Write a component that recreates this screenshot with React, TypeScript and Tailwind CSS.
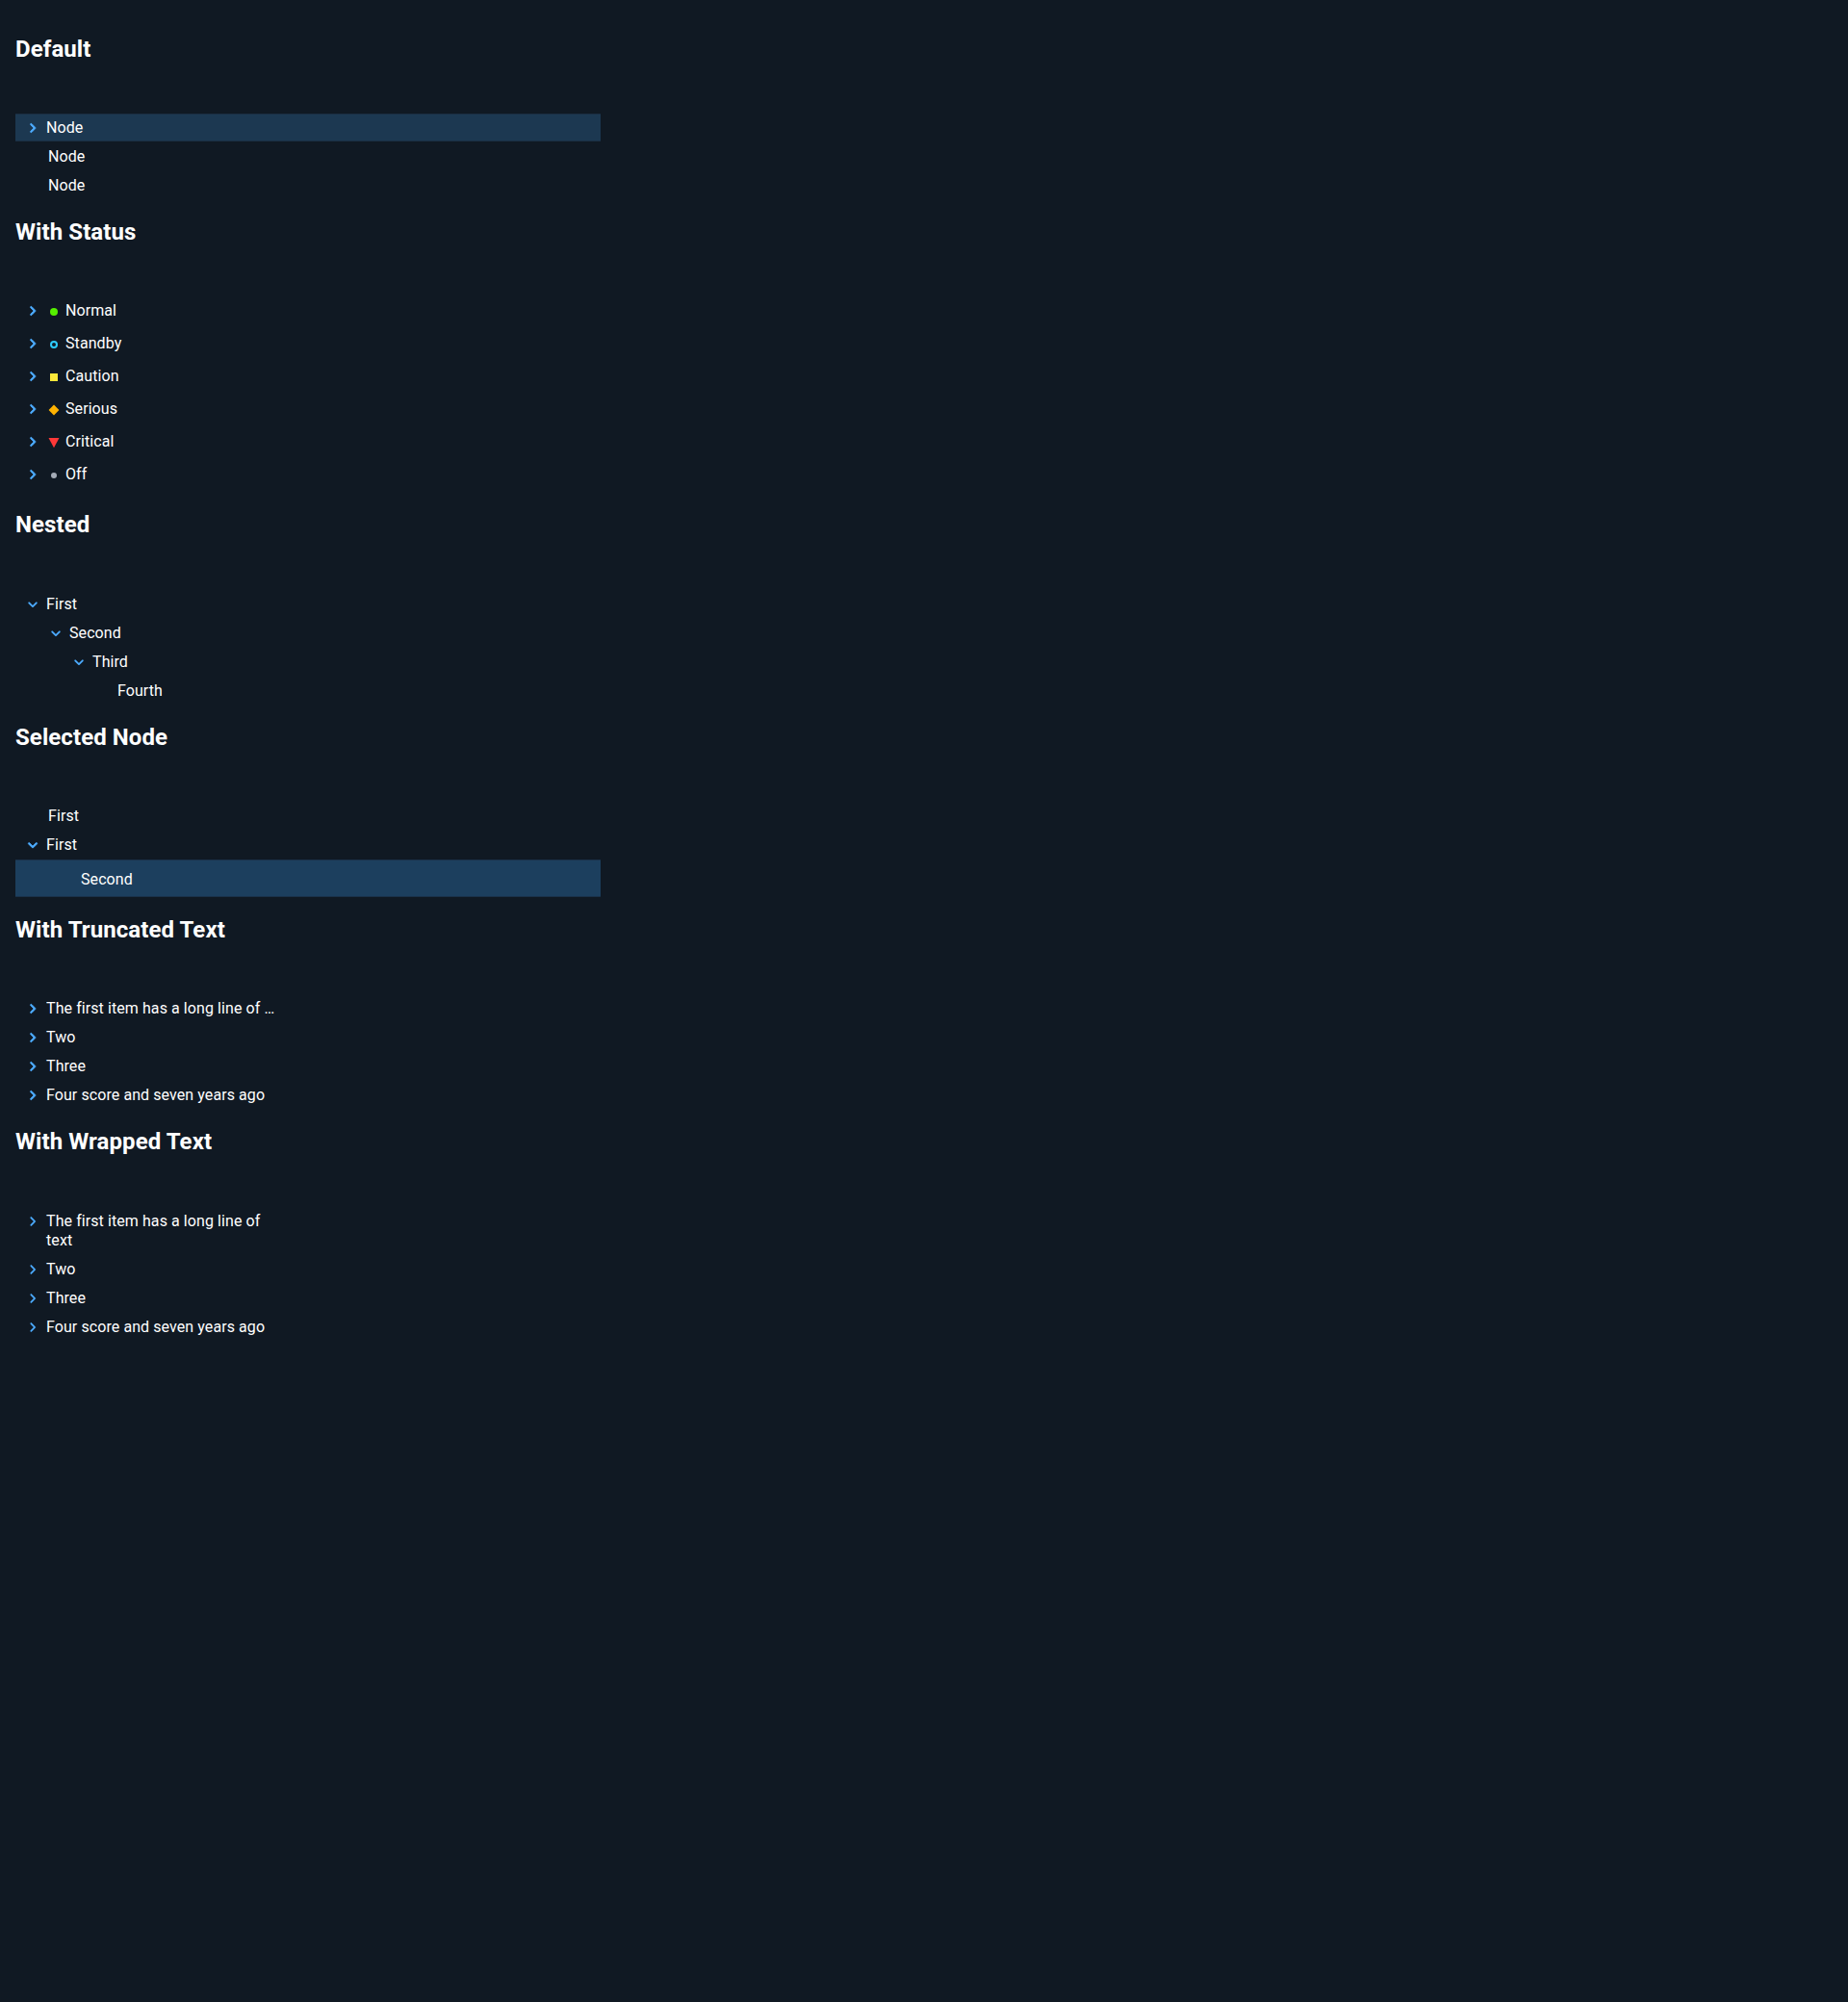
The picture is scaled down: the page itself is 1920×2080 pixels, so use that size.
import type { ReactNode } from "react";

function Chevron({ open, bold = true }: { open?: boolean; bold?: boolean }) {
  return (
    <svg
      viewBox="0 0 24 24"
      className="size-5 shrink-0 fill-[#4dacff] stroke-[#4dacff]"
      strokeWidth={bold ? 0.9 : 0.2}
    >
      {open ? (
        <path d="M15.88 9.29L12 13.17 8.12 9.29a.996.996 0 1 0-1.41 1.41l4.59 4.59c.39.39 1.02.39 1.41 0l4.59-4.59a.996.996 0 0 0 0-1.41c-.39-.38-1.03-.39-1.42 0z" />
      ) : (
        <path d="M9.29 6.71c-.39.39-.39 1.02 0 1.41L13.17 12l-3.88 3.88c-.39.39-.39 1.02 0 1.41.39.39 1.02.39 1.41 0l4.59-4.59c.39-.39.39-1.02 0-1.41L10.7 6.7c-.38-.38-1.02-.38-1.41.01z" />
      )}
    </svg>
  );
}

type Status = "normal" | "standby" | "caution" | "serious" | "critical" | "off";

function StatusSymbol({ status }: { status: Status }) {
  return (
    <svg viewBox="0 0 12 12" className="mt-0.5 mr-0.5 ml-1.5 size-3 shrink-0">
      {status === "normal" && <circle cx="6" cy="6" r="4" fill="#56f000" />}
      {status === "standby" && <circle cx="6" cy="6" r="3" fill="none" stroke="#2dccff" strokeWidth="2" />}
      {status === "caution" && <rect x="2" y="2" width="8" height="8" fill="#fce83a" />}
      {status === "serious" && <path d="M6 .6 11.4 6 6 11.4.6 6z" fill="#ffb302" />}
      {status === "critical" && <path d="M.5 1h11L6 11.2z" fill="#ff3838" />}
      {status === "off" && <circle cx="6" cy="6" r="3" fill="#a4abb6" />}
    </svg>
  );
}

function Section({
  title,
  treeClass = "-mt-0.5 pb-0.5",
  children,
}: {
  title: string;
  treeClass?: string;
  children: ReactNode;
}) {
  return (
    <section>
      <h2 className="h-[100px] pt-[17px] text-2xl leading-7 font-bold">{title}</h2>
      <div className={treeClass}>{children}</div>
    </section>
  );
}

interface RowProps {
  label: string;
  chevron?: "open" | "closed";
  thin?: boolean;
  status?: Status;
  className?: string;
  textClass?: string;
}

function Row({ label, chevron, thin, status, className = "h-[30px] items-center pl-2", textClass = "" }: RowProps) {
  return (
    <div className={`flex ${className}`}>
      {chevron ? <Chevron open={chevron === "open"} bold={!thin} /> : <span className="w-[22px] shrink-0" />}
      {status && <StatusSymbol status={status} />}
      <span className={`ml-1 ${textClass}`}>{label}</span>
    </div>
  );
}

const STATUSES: { label: string; status: Status }[] = [
  { label: "Normal", status: "normal" },
  { label: "Standby", status: "standby" },
  { label: "Caution", status: "caution" },
  { label: "Serious", status: "serious" },
  { label: "Critical", status: "critical" },
  { label: "Off", status: "off" },
];

export default function App() {
  return (
    <main className="min-h-[2080px] bg-[#101923] px-4 pt-5 font-['Roboto',sans-serif] text-base leading-5 tracking-[0.08px] text-white">
      <div className="w-[608px]">
        <Section title="Default">
          <Row
            label="Node"
            chevron="closed"
            className="mb-px h-[29px] items-start border-y border-[#1a2e42] bg-[#1c3851] pt-1 pl-2"
          />
          <Row label="Node" />
          <Row label="Node" />
        </Section>
        <Section title="With Status" treeClass="-mt-1 pb-1">
          {STATUSES.map(({ label, status }) => (
            <Row
              key={status}
              label={label}
              chevron="closed"
              status={status}
              className="h-[34px] items-center pl-2"
            />
          ))}
        </Section>
        <Section title="Nested" treeClass="-mt-px pb-0.5">
          <Row label="First" chevron="open" thin />
          <Row label="Second" chevron="open" thin className="h-[30px] items-center pl-8" />
          <Row label="Third" chevron="open" thin className="h-[30px] items-center pl-14" />
          <Row label="Fourth" className="h-[30px] items-center pl-20" />
        </Section>
        <Section title="Selected Node">
          <Row label="First" />
          <Row label="First" chevron="open" />
          <Row
            label="Second"
            className="mb-px h-[39px] items-start border-y border-[#1a324a] bg-[#1c3f5e] pt-2.5 pl-[42px]"
          />
        </Section>
        <Section title="With Truncated Text">
          <div className="w-[272px]">
            <Row label="The first item has a long line of text" chevron="closed" textClass="truncate" />
            <Row label="Two" chevron="closed" />
            <Row label="Three" chevron="closed" />
            <Row label="Four score and seven years ago" chevron="closed" />
          </div>
        </Section>
        <Section title="With Wrapped Text">
          <div className="w-[272px] pt-px">
            <Row
              label="The first item has a long line of text"
              chevron="closed"
              thin
              className="h-[50px] items-start py-[5px] pl-2"
            />
            <Row label="Two" chevron="closed" thin />
            <Row label="Three" chevron="closed" thin />
            <Row label="Four score and seven years ago" chevron="closed" thin />
          </div>
        </Section>
      </div>
    </main>
  );
}
